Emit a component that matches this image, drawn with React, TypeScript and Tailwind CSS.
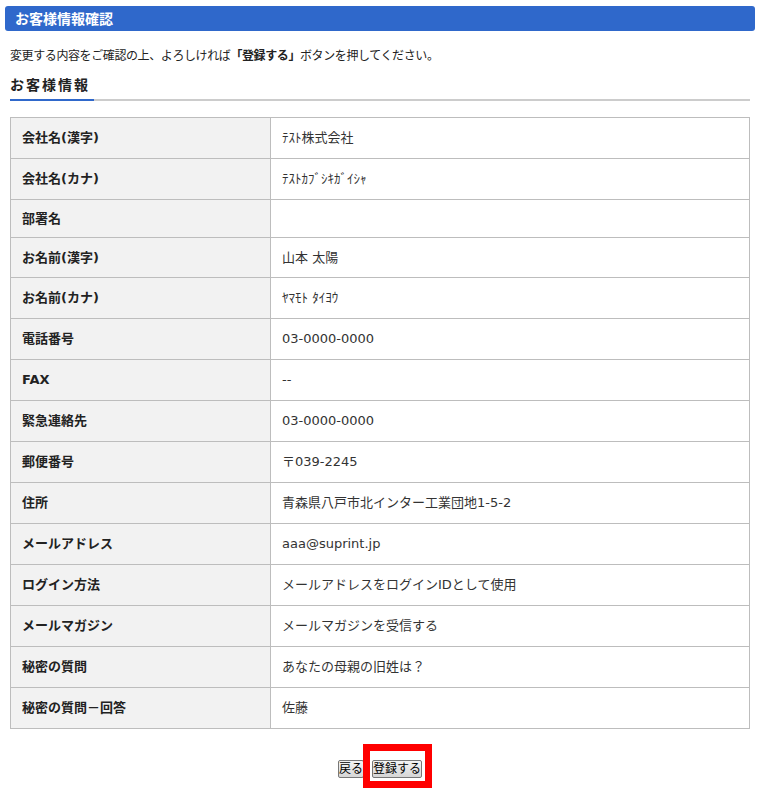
import React from "react";

const rows: [string, string, string][] = [
  ["会社名(漢字)", "ﾃｽﾄ株式会社", "h-[41px]"],
  ["会社名(カナ)", "ﾃｽﾄｶﾌﾞｼｷｶﾞｲｼｬ", "h-[41px]"],
  ["部署名", "", "h-[38px]"],
  ["お名前(漢字)", "山本 太陽", "h-[40px]"],
  ["お名前(カナ)", "ﾔﾏﾓﾄ ﾀｲﾖｳ", "h-[41px]"],
  ["電話番号", "03-0000-0000", "h-[41px]"],
  ["FAX", "--", "h-[41px]"],
  ["緊急連絡先", "03-0000-0000", "h-[41px]"],
  ["郵便番号", "〒039-2245", "h-[41px]"],
  ["住所", "青森県八戸市北インター工業団地1-5-2", "h-[41px]"],
  ["メールアドレス", "aaa@suprint.jp", "h-[41px]"],
  ["ログイン方法", "メールアドレスをログインIDとして使用", "h-[41px]"],
  ["メールマガジン", "メールマガジンを受信する", "h-[41px]"],
  ["秘密の質問", "あなたの母親の旧姓は？", "h-[41px]"],
  ["秘密の質問－回答", "佐藤", "h-[41px]"],
];

export default function App() {
  return (
    <div
      className="w-[762px] min-h-[798px] bg-white text-[#222] text-[13px]"
      style={{ fontFamily: '"DejaVu Sans", "Noto Sans CJK JP", sans-serif' }}
    >
      <div className="pt-[6px] pl-[5px] pr-[7px]">
        <div className="h-[25px] rounded-[3px] bg-[#2f68cb] flex items-center pl-[10px] text-white font-bold text-[14px] leading-none">
          お客様情報確認
        </div>
      </div>

      <div className="pl-[10px] pr-[12px]">
        <p className="mt-[17px] text-[12px] leading-[16px] tracking-[-0.4px] text-[#222]">
          変更する内容をご確認の上、よろしければ<span className="font-bold">「登録する」</span>ボタンを押してください。
        </p>

        <h2 className="mt-[13px] text-[14px] leading-[16px] font-bold tracking-[2px] text-[#222] pb-[6px]">
          お客様情報
        </h2>
        <div className="flex h-[2px]">
          <div className="w-[84px] bg-[#2f68cb]" />
          <div className="flex-1 bg-[#cccccc]" />
        </div>

        <table className="mt-[16px] w-[740px] border-collapse">
          <tbody>
            {rows.map(([label, value, h]) => (
              <tr key={label} className={h}>
                <td className="w-[260px] border border-[#bdbdbd] bg-[#f2f2f2] pl-[11px] font-bold text-[13px] text-[#222]">
                  {label}
                </td>
                <td className="border border-[#bdbdbd] pl-[11px] text-[13px] text-[#333]">
                  {value}
                </td>
              </tr>
            ))}
          </tbody>
        </table>

        <div className="mt-[31px] flex justify-center items-center gap-[8px]">
          <button className="h-[18px] px-0 border border-[#777] rounded-[2px] bg-gradient-to-b from-[#f4f4f4] to-[#d6d6d6] text-[12px] leading-none text-black">
            戻る
          </button>
          <span className="relative flex">
            <button className="h-[18px] px-0 border border-[#777] rounded-[2px] bg-gradient-to-b from-[#f4f4f4] to-[#d6d6d6] text-[12px] leading-none text-black">
              登録する
            </button>
            <span className="absolute -left-[9px] -right-[10px] -top-[16px] -bottom-[10px] border-[7px] border-[#ff0000] pointer-events-none" />
          </span>
        </div>
      </div>
    </div>
  );
}
